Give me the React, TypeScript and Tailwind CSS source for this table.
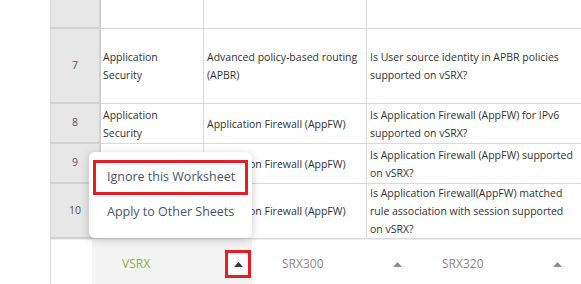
import { useState } from "react";

type Row = {
  num?: number;
  category?: string;
  feature?: string;
  question?: string;
  height: string;
};

const rows: Row[] = [
  { height: "h-[29px]" },
  {
    num: 7,
    category: "Application Security",
    feature: "Advanced policy-based routing (APBR)",
    question: "Is User source identity in APBR policies supported on vSRX?",
    height: "h-[75px]",
  },
  {
    num: 8,
    category: "Application Security",
    feature: "Application Firewall (AppFW)",
    question: "Is Application Firewall (AppFW) for IPv6 supported on vSRX?",
    height: "h-[40px]",
  },
  {
    num: 9,
    feature: "Application Firewall (AppFW)",
    question: "Is Application Firewall (AppFW) supported on vSRX?",
    height: "h-[40px]",
  },
  {
    num: 10,
    category: "Application Security",
    feature: "Application Firewall (AppFW)",
    question:
      "Is Application Firewall(AppFW) matched rule association with session supported on vSRX?",
    height: "h-[55px]",
  },
];

const sheets = ["VSRX", "SRX300", "SRX320"];

function Caret({ className }: { className?: string }) {
  return (
    <svg width="9" height="5" viewBox="0 0 9 5" className={className}>
      <path d="M0 5 L4.5 0 L9 5 Z" fill="currentColor" />
    </svg>
  );
}

export default function App() {
  const [active] = useState(0);

  return (
    <div
      className="relative flex h-[284px] w-[581px] overflow-hidden bg-white text-[#333]"
      style={{ fontFamily: '"Open Sans", sans-serif' }}
    >
      <div className="w-[50px] shrink-0" />

      <div className="flex flex-1 flex-col border-l border-[#d9d9d9]">
        {rows.map((row, i) => (
          <div
            key={i}
            className={`grid shrink-0 grid-cols-[50px_103px_163px_1fr] ${row.height}`}
          >
            <div className="flex items-center justify-center border-b-2 border-r-2 border-[#d2d2d2] bg-[#e7e7e7] text-[10.5px] text-[#555]">
              {row.num}
            </div>
            <div className="flex items-center border-b border-r border-[#d9d9d9] pl-[2px] pr-1 text-[10.5px] leading-[18px]">
              {row.category}
            </div>
            <div className="flex items-center border-b border-r border-[#d9d9d9] pl-[3px] pr-1 text-[10.5px] leading-[18px]">
              {row.feature}
            </div>
            <div className="flex items-center border-b border-[#d9d9d9] pl-[3px] pr-[4px] text-[10.5px] leading-[18px]">
              {row.question}
            </div>
          </div>
        ))}

        <div className="flex flex-1 border-t border-[#eeeeee]">
          <div className="w-[41px] shrink-0" />
          {sheets.map((name, i) => (
            <div
              key={name}
              className={`flex w-[160px] shrink-0 items-center justify-between pl-[30px] pt-[4px] text-[12px] ${
                i === active
                  ? "bg-[#f4f4f4] pr-[1px] text-[#8cb23a]"
                  : "pr-[10px] text-[#8a8a8a]"
              }`}
            >
              <span>{name}</span>
              {i === active ? (
                <div className="flex h-[28px] w-[26px] items-center justify-center border-[3px] border-[#e41e26]">
                  <div className="flex h-[18px] w-[18px] items-center justify-center rounded bg-white text-[#2d3748]">
                    <Caret />
                  </div>
                </div>
              ) : (
                <Caret className="text-[#8a8f96]" />
              )}
            </div>
          ))}
        </div>
      </div>

      <div className="absolute left-[89px] top-[152px] w-[163px] rounded-md bg-white px-[4px] py-[8px] text-[12.5px] text-[#4a5568] shadow-[0_2px_10px_rgba(0,0,0,0.2)]">
        <div className="flex h-[35px] items-center border-[3px] border-[#e41e26] pl-[11px]">
          Ignore this Worksheet
        </div>
        <div className="flex h-[35px] items-center pl-[14px]">
          Apply to Other Sheets
        </div>
      </div>
    </div>
  );
}
